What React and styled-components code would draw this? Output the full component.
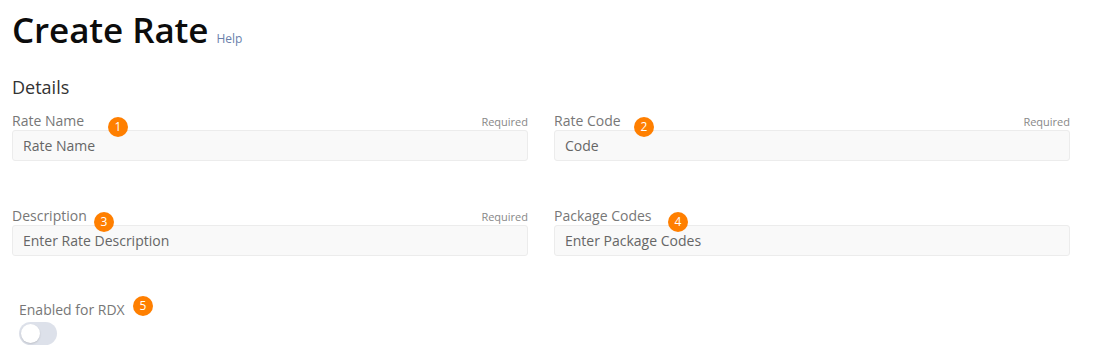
import React from 'react';
import styled, { createGlobalStyle } from 'styled-components';

const GlobalStyle = createGlobalStyle`
  body {
    margin: 0;
    background: #ffffff;
    font-family: "Open Sans", "Liberation Sans", sans-serif;
  }
`;

const Page = styled.div`
  padding: 7px 28px 0 12px;
  width: 1098px;
  box-sizing: border-box;
`;

const Header = styled.div`
  display: flex;
  align-items: baseline;
  gap: 8px;
  height: 46px;
`;

const Title = styled.h1`
  margin: 0;
  font-size: 35px;
  font-weight: 600;
  color: #0c0c0c;
  letter-spacing: -0.1px;
  line-height: 46px;
`;

const HelpLink = styled.a`
  font-size: 12px;
  color: #6a7fab;
  text-decoration: none;
`;

const SectionTitle = styled.h2`
  margin: 22px 0 13px;
  font-size: 18px;
  font-weight: 400;
  color: #333;
  line-height: 24px;
`;

const Grid = styled.div`
  display: grid;
  grid-template-columns: 516px 516px;
  column-gap: 26px;
  row-gap: 46px;
`;

const Field = styled.div`
  position: relative;
  display: flex;
  flex-direction: column;
`;

const LabelRow = styled.div`
  display: flex;
  justify-content: space-between;
  align-items: flex-end;
  height: 18px;
`;

const Label = styled.label`
  font-size: 14px;
  color: #777;
  line-height: 18px;
`;

const Required = styled.span`
  font-size: 11px;
  color: #888;
  line-height: 16px;
`;

const Input = styled.input`
  box-sizing: border-box;
  height: 31px;
  padding: 0 10px;
  background: #f9f9f9;
  border: 1px solid #ececec;
  border-radius: 3px;
  font-family: inherit;
  font-size: 14px;
  color: #333;
  outline: none;
  &::placeholder {
    color: #666;
  }
`;

const Badge = styled.span`
  position: absolute;
  top: ${({ $top }) => $top}px;
  left: ${({ $left }) => $left}px;
  width: 20px;
  height: 20px;
  border-radius: 50%;
  background: #ff7f00;
  color: #fff;
  font-size: 12px;
  display: flex;
  align-items: center;
  justify-content: center;
  line-height: 1;
`;

const ToggleField = styled.div`
  position: relative;
  display: flex;
  flex-direction: column;
  gap: 3px;
  margin: 45px 0 0 7px;
`;

const Toggle = styled.span`
  position: relative;
  width: 38px;
  height: 23px;
  border-radius: 12px;
  background: #dde1ea;
  &::after {
    content: '';
    position: absolute;
    left: 2px;
    top: 2px;
    width: 19px;
    height: 19px;
    border-radius: 50%;
    background: #fff;
    box-shadow: 0 1px 2px rgba(0, 0, 0, 0.15);
  }
`;

const fields = [
  { label: 'Rate Name', placeholder: 'Rate Name', required: true, badge: 1, left: 96 },
  { label: 'Rate Code', placeholder: 'Code', required: true, badge: 2, left: 80 },
  { label: 'Description', placeholder: 'Enter Rate Description', required: true, badge: 3, left: 82 },
  { label: 'Package Codes', placeholder: 'Enter Package Codes', required: false, badge: 4, left: 114 },
];

export default function App() {
  return (
    <>
      <GlobalStyle />
      <Page>
        <Header>
          <Title>Create Rate</Title>
          <HelpLink href="#">Help</HelpLink>
        </Header>
        <SectionTitle>Details</SectionTitle>
        <Grid>
          {fields.map((f) => (
            <Field key={f.label}>
              <LabelRow>
                <Label>{f.label}</Label>
                {f.required && <Required>Required</Required>}
              </LabelRow>
              <Input placeholder={f.placeholder} />
              <Badge $top={5} $left={f.left}>{f.badge}</Badge>
            </Field>
          ))}
        </Grid>
        <ToggleField>
          <Label>Enabled for RDX</Label>
          <Toggle />
          <Badge $top={-5} $left={114}>5</Badge>
        </ToggleField>
      </Page>
    </>
  );
}
